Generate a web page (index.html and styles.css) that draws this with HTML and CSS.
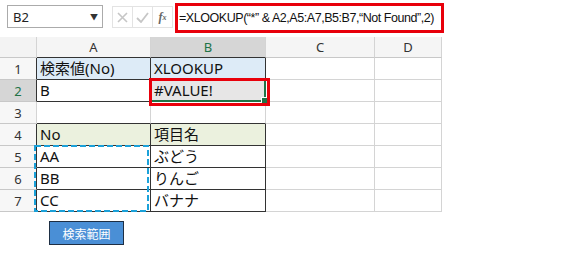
FILE: index.html
```html
<!DOCTYPE html>
<html lang="ja">
<head>
<meta charset="UTF-8">
<title>XLOOKUP #VALUE!</title>
<link rel="stylesheet" href="styles.css">
</head>
<body>
    <div class="formula-bar">
        <div class="name-box">
            <span>B2</span>
            <span class="drop">&#9660;</span>
        </div>
        <div class="fx-buttons">
            <div class="fx-btn">
                <svg width="11" height="11" viewBox="0 0 11 11"><path d="M1 1L10 10M10 1L1 10" stroke="#c6c6c6" stroke-width="1.6" fill="none"/></svg>
            </div>
            <div class="fx-btn">
                <svg width="13" height="11" viewBox="0 0 13 11"><path d="M1 6L5 10L12 1" stroke="#c6c6c6" stroke-width="1.8" fill="none"/></svg>
            </div>
            <div class="fx-btn fx">f<sub>x</sub></div>
        </div>
        <div class="formula-input">=XLOOKUP(“*” &amp; A2,A5:A7,B5:B7,“Not Found”,2)</div>
    </div>

    <div class="sheet">
        <div class="hd corner"></div>
        <div class="hd col">A</div>
        <div class="hd col sel">B</div>
        <div class="hd col">C</div>
        <div class="hd col">D</div>

        <div class="hd row dark-r">1</div>
        <div class="cell blue dk">検索値(No)</div>
        <div class="cell blue dk">XLOOKUP</div>
        <div class="cell"></div>
        <div class="cell"></div>

        <div class="hd row sel dark-r">2</div>
        <div class="cell dk">B</div>
        <div class="cell grey dk">#VALUE!</div>
        <div class="cell"></div>
        <div class="cell"></div>

        <div class="hd row">3</div>
        <div class="cell dark-b"></div>
        <div class="cell dark-b"></div>
        <div class="cell"></div>
        <div class="cell"></div>

        <div class="hd row dark-r">4</div>
        <div class="cell green dk">No</div>
        <div class="cell green dk">項目名</div>
        <div class="cell"></div>
        <div class="cell"></div>

        <div class="hd row dark-r">5</div>
        <div class="cell dk">AA</div>
        <div class="cell dk">ぶどう</div>
        <div class="cell"></div>
        <div class="cell"></div>

        <div class="hd row dark-r">6</div>
        <div class="cell dk">BB</div>
        <div class="cell dk">りんご</div>
        <div class="cell"></div>
        <div class="cell"></div>

        <div class="hd row dark-r">7</div>
        <div class="cell dk">CC</div>
        <div class="cell dk">バナナ</div>
        <div class="cell"></div>
        <div class="cell"></div>

        <!-- selection and annotations over the grid -->
        <div class="active-cell"><span class="handle"></span></div>
        <div class="red-mark"></div>
        <svg class="marquee" width="116" height="68" viewBox="0 0 116 68">
            <rect x="1" y="1" width="113" height="65" fill="none" stroke="#1ba1d9" stroke-width="2" stroke-dasharray="6 3"/>
        </svg>
    </div>

    <button class="range-btn">検索範囲</button>
</body>
</html>
```

FILE: styles.css
```css
body {
    margin: 0;
    background-color: #fff;
    font-family: "Noto Sans", "Noto Sans CJK JP", sans-serif;
    color: #222;
}

/* Formula bar */
.formula-bar {
    height: 37px;
    display: flex;
    align-items: flex-start;
}
.name-box {
    margin: 5px 0 0 7px;
    width: 96px;
    height: 23px;
    box-sizing: border-box;
    border: 1px solid #ababab;
    display: flex;
    align-items: center;
    justify-content: space-between;
    padding: 0 4px 0 5px;
    font-size: 13px;
}
.name-box .drop {
    font-size: 8px;
    color: #333;
}
.fx-buttons {
    margin: 6px 0 0 9px;
    height: 22px;
    display: flex;
    border: 1px solid #e3e3e3;
    box-sizing: border-box;
}
.fx-btn {
    width: 19px;
    display: flex;
    align-items: center;
    justify-content: center;
    border-right: 1px solid #e3e3e3;
}
.fx-btn.fx {
    border-right: none;
    font-family: "Liberation Serif", serif;
    font-style: italic;
    font-weight: bold;
    font-size: 12px;
    color: #666;
}
.fx-btn.fx sub {
    font-size: 8px;
}
.formula-input {
    margin: 3px 0 0 2px;
    width: 269px;
    height: 30px;
    box-sizing: border-box;
    border: 3px solid #e8000b;
    display: flex;
    align-items: center;
    padding-left: 1px;
    font-family: "Liberation Sans", "Noto Sans CJK JP", sans-serif;
    font-size: 12.5px;
    letter-spacing: -0.45px;
    white-space: nowrap;
    overflow: hidden;
    color: #111;
}

/* Sheet grid */
.sheet {
    position: relative;
    width: 442px;
    display: grid;
    grid-template-columns: 37px 114px 115px 109px 67px;
    grid-template-rows: 21px repeat(7, 22px);
}
.hd {
    background-color: #f5f5f5;
    border-right: 1px solid #d4d4d4;
    border-bottom: 1px solid #c8c8c8;
    box-sizing: border-box;
    display: flex;
    align-items: center;
    justify-content: center;
    font-size: 13px;
    color: #333;
}
.hd.corner {
    background-color: #f3f3f3;
}
.hd.sel {
    background-color: #d6d6d6;
    color: #217346;
}
.hd.row {
    background-color: #f7f7f7;
}
.hd.row.sel {
    background-color: #d6d6d6;
}
.cell {
    border-right: 1px solid #d4d4d4;
    border-bottom: 1px solid #d4d4d4;
    box-sizing: border-box;
    display: flex;
    align-items: flex-end;
    padding: 0 2px 1px 3px;
    font-size: 15px;
    line-height: 19px;
    color: #111;
    white-space: nowrap;
}
.cell.dk {
    border-right-color: #333;
    border-bottom-color: #333;
}
.cell.dark-b {
    border-bottom-color: #333;
}
.hd.dark-r {
    border-right-color: #333;
}
.hd.col:nth-child(2),
.hd.col:nth-child(3) {
    border-bottom-color: #333;
}
.cell.blue {
    background-color: #ddebf7;
}
.cell.green {
    background-color: #ebf1de;
}
.cell.grey {
    background-color: #e7e6e6;
}

/* Overlays */
.active-cell {
    position: absolute;
    left: 150px;
    top: 42px;
    width: 116px;
    height: 23px;
    box-sizing: border-box;
    border: 2px solid #217346;
}
.active-cell .handle {
    position: absolute;
    right: -4px;
    bottom: -4px;
    width: 5px;
    height: 5px;
    background-color: #217346;
    border: 1px solid #fff;
}
.red-mark {
    position: absolute;
    left: 149px;
    top: 41px;
    width: 121px;
    height: 28px;
    box-sizing: border-box;
    border: 3px solid #e8000b;
}
.marquee {
    position: absolute;
    left: 34px;
    top: 108px;
}

.range-btn {
    display: block;
    margin: 9px 0 0 49px;
    width: 75px;
    height: 24px;
    background-color: #4a8fd6;
    border: 1px solid #1e2f44;
    color: #fff;
    font-family: "Noto Sans CJK JP", sans-serif;
    font-size: 12px;
    padding: 0;
    border-radius: 0;
}
```
